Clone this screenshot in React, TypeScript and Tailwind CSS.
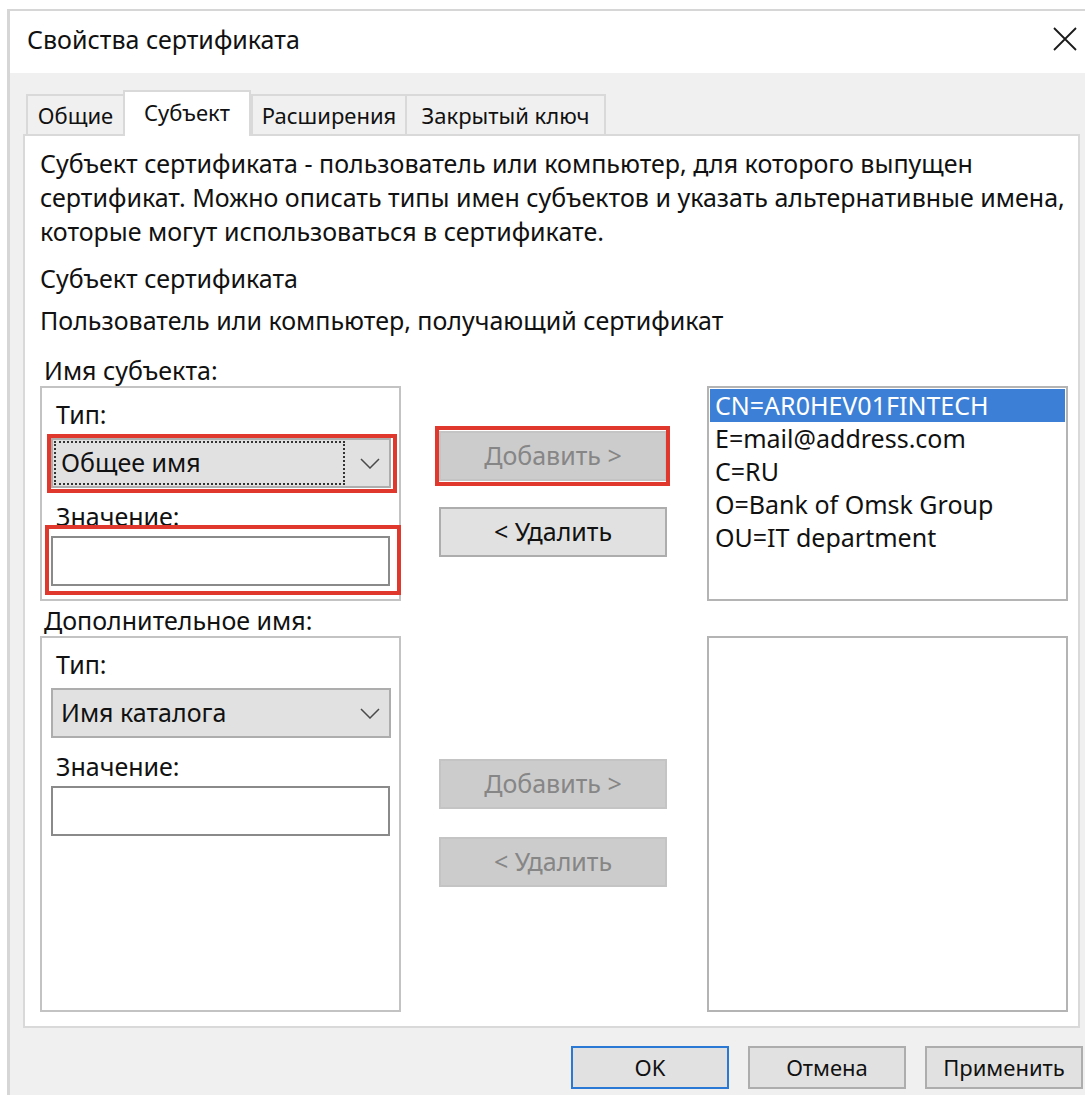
import type { ReactNode } from "react";

const subjectNames = [
  "CN=AR0HEV01FINTECH",
  "E=mail@address.com",
  "C=RU",
  "O=Bank of Omsk Group",
  "OU=IT department",
];

const tabs = [
  { label: "Общие", width: "w-[99px]" },
  { label: "Субъект", width: "w-[128px]", active: true },
  { label: "Расширения", width: "w-[156px]" },
  { label: "Закрытый ключ", width: "w-[201px]" },
];

const intro = [
  "Субъект сертификата - пользователь или компьютер, для которого выпущен",
  "сертификат. Можно описать типы имен субъектов и указать альтернативные имена,",
  "которые могут использоваться в сертификате.",
];

function Chevron() {
  return (
    <svg width="20" height="11" viewBox="0 0 20 11" fill="none">
      <path d="M1 1l9 9 9-9" stroke="#4a4a4a" strokeWidth="1.5" />
    </svg>
  );
}

function CloseGlyph() {
  return (
    <svg width="24" height="24" viewBox="0 0 24 24" fill="none">
      <path d="M1 1l22 22M23 1L1 23" stroke="#1a1a1a" strokeWidth="1.8" />
    </svg>
  );
}

// red marker frame drawn over a control
function Marker({ className }: { className: string }) {
  return <div className={`pointer-events-none absolute border-4 border-[#e0382c] ${className}`} />;
}

function ActionButton({ children, disabled }: { children: ReactNode; disabled?: boolean }) {
  return (
    <div
      className={
        disabled
          ? "flex h-[50px] w-[228px] items-center justify-center border-2 border-[#c4c4c4] bg-[#cccccc] text-[#868686]"
          : "flex h-[50px] w-[228px] items-center justify-center border-2 border-[#adadad] bg-[#e1e1e1] text-[#111]"
      }
    >
      {children}
    </div>
  );
}

function DialogButton({ children, isDefault }: { children: ReactNode; isDefault?: boolean }) {
  return (
    <div
      className={`flex h-[43px] w-[158px] items-center justify-center border-2 bg-[#e1e1e1] text-[22px] ${
        isDefault ? "border-[#2a7ad5]" : "border-[#adadad]"
      }`}
    >
      {children}
    </div>
  );
}

function Combo({ value, focused }: { value: string; focused?: boolean }) {
  return (
    <div className="flex h-[50px] w-[340px] items-center border-2 border-[#adadad] bg-[#e1e1e1] pl-[1px] pr-[9px]">
      <div
        className={`flex h-[44px] flex-1 items-center pl-[5px] ${
          focused ? "border-2 border-dotted border-[#333]" : "border-2 border-transparent"
        }`}
      >
        {value}
      </div>
      <div className="ml-[15px] pt-[1px]">
        <Chevron />
      </div>
    </div>
  );
}

function TextInput() {
  return <div className="h-[50px] w-[339px] border-2 border-[#8a8a8a] bg-white" />;
}

function NameGroup({ combo, focused, marked }: { combo: string; focused?: boolean; marked?: boolean }) {
  return (
    <div className="flex flex-col pl-[9px] pt-[10px]">
      <div className="pl-[5px] leading-[32px]">Тип:</div>
      <div className="relative mt-[8px] self-start">
        <Combo value={combo} focused={focused} />
        {marked && <Marker className="-left-[4px] -top-[4px] -right-[6px] -bottom-[5px]" />}
      </div>
      <div className="mt-[12px] pl-[5px] leading-[32px]">Значение:</div>
      <div className="relative mt-[4px] self-start">
        <TextInput />
        {marked && <Marker className="-left-[6px] -top-[11px] -right-[11px] -bottom-[9px]" />}
      </div>
    </div>
  );
}

export default function App() {
  return (
    <div
      className="h-[1095px] w-[1085px] overflow-hidden bg-white text-[25px] text-[#111]"
      style={{ fontFamily: '"Noto Sans", "Open Sans", sans-serif' }}
    >
      <div className="ml-[7px] mt-[9px] flex h-[1086px] w-[1078px] flex-col border-l-[3px] border-t-2 border-[#d6d6d6] bg-[#f0f0f0]">
        {/* title bar */}
        <div className="flex h-[62px] shrink-0 items-center justify-between bg-white pl-[17px] pr-[8px]">
          <span className="pb-[4px]">Свойства сертификата</span>
          <div className="pb-[6px]">
            <CloseGlyph />
          </div>
        </div>

        {/* tab strip */}
        <div className="mt-[17px] flex h-[44px] items-end pl-[16px] text-[22px]">
          {tabs.map((t) =>
            t.active ? (
              <div
                key={t.label}
                className={`${t.width} relative z-10 -mb-[2px] flex h-[46px] items-center justify-center border-2 border-b-0 border-[#d9d9d9] bg-white pb-[4px]`}
              >
                {t.label}
              </div>
            ) : (
              <div
                key={t.label}
                className={`${t.width} -mr-[2px] flex h-[40px] items-center justify-center border-2 border-b-0 border-[#d9d9d9] bg-[#f0f0f0]`}
              >
                {t.label}
              </div>
            )
          )}
        </div>

        {/* tab page */}
        <div className="ml-[13px] mr-[5px] h-[894px] border-2 border-[#d9d9d9] bg-white pl-[15px] pt-[10px]">
          <div className="leading-[34px] whitespace-nowrap">
            {intro.map((line) => (
              <p key={line}>{line}</p>
            ))}
          </div>
          <p className="mt-[13px] leading-[34px]">Субъект сертификата</p>
          <p className="mt-[8px] leading-[34px]">Пользователь или компьютер, получающий сертификат</p>

          {/* subject name row */}
          <div className="mt-[17px] flex">
            <div className="flex w-[361px] flex-col">
              <div className="pl-[4px] leading-[32px]">Имя субъекта:</div>
              <div className="h-[215px] border-2 border-[#c3c3c3]">
                <NameGroup combo="Общее имя" focused marked />
              </div>
            </div>
            <div className="ml-[38px] flex flex-col gap-[26px] pt-[77px]">
              <div className="relative">
                <ActionButton disabled>Добавить &gt;</ActionButton>
                <Marker className="-left-[4px] -top-[5px] -right-[3px] -bottom-[5px]" />
              </div>
              <ActionButton>&lt; Удалить</ActionButton>
            </div>
            <div className="ml-[40px] pt-[32px]">
              <div className="h-[215px] w-[361px] border-2 border-[#b4b4b4] px-[1px] pt-[1px]">
                {subjectNames.map((n, i) => (
                  <div
                    key={n}
                    className={
                      i === 0
                        ? "h-[33px] bg-[#3c7fd6] pl-[5px] leading-[33px] text-white"
                        : "h-[33px] pl-[5px] leading-[33px]"
                    }
                  >
                    {n}
                  </div>
                ))}
              </div>
            </div>
          </div>

          {/* alternative name row */}
          <div className="mt-[3px] flex">
            <div className="flex w-[361px] flex-col">
              <div className="pl-[4px] leading-[32px]">Дополнительное имя:</div>
              <div className="h-[376px] border-2 border-[#c3c3c3]">
                <NameGroup combo="Имя каталога" />
              </div>
            </div>
            <div className="ml-[38px] flex flex-col gap-[28px] pt-[155px]">
              <ActionButton disabled>Добавить &gt;</ActionButton>
              <ActionButton disabled>&lt; Удалить</ActionButton>
            </div>
            <div className="ml-[40px] pt-[32px]">
              <div className="h-[376px] w-[361px] border-2 border-[#b4b4b4]" />
            </div>
          </div>
        </div>

        {/* dialog buttons */}
        <div className="mt-[18px] flex justify-end gap-[19px] pr-[2px]">
          <DialogButton isDefault>OK</DialogButton>
          <DialogButton>Отмена</DialogButton>
          <DialogButton>Применить</DialogButton>
        </div>
      </div>
    </div>
  );
}
